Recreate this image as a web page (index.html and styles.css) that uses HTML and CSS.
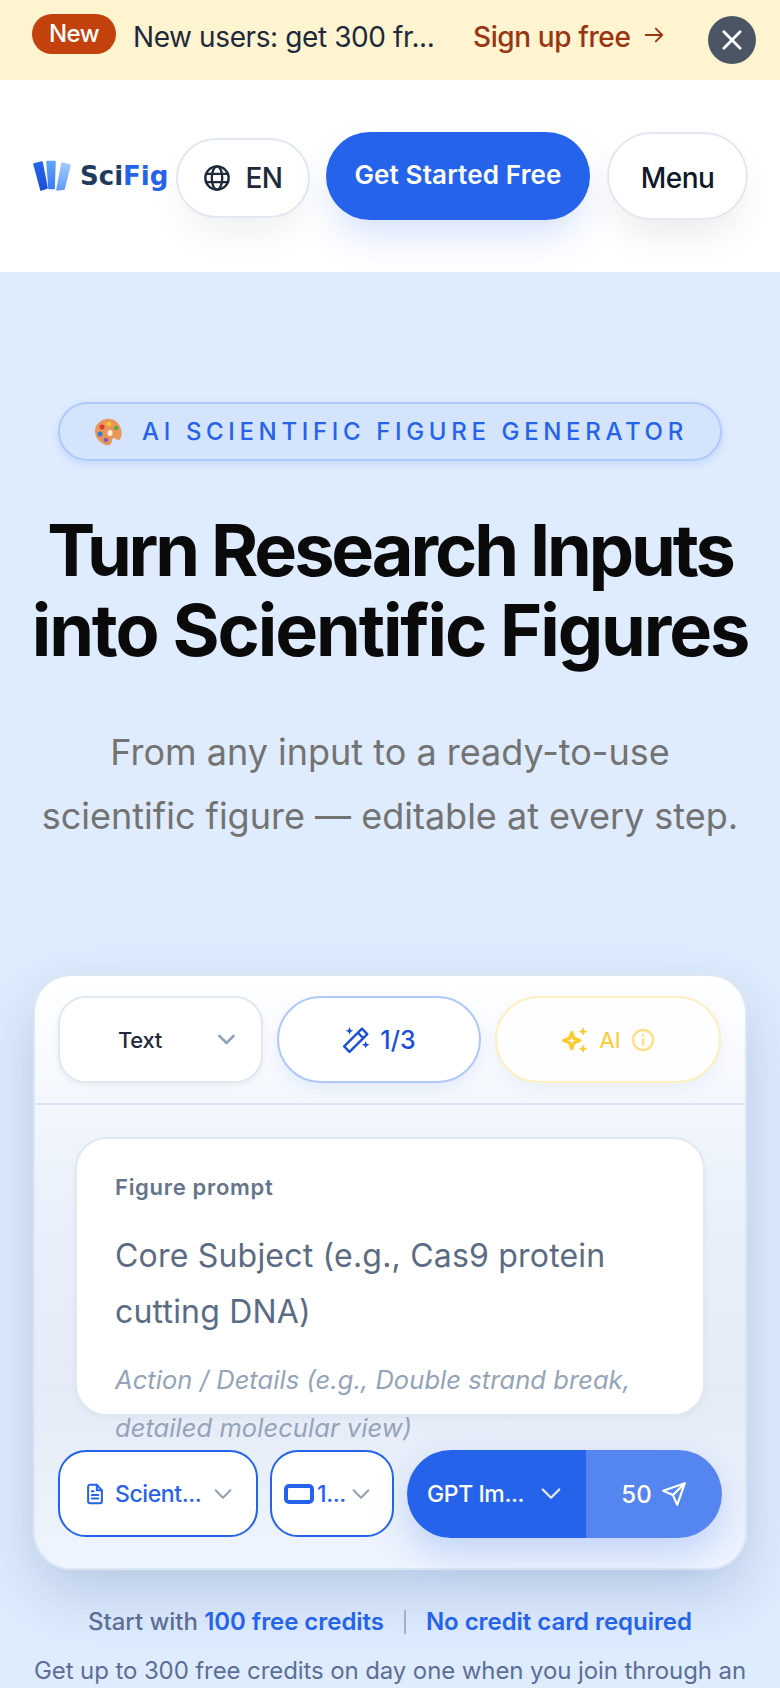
FILE: index.html
```html
<!DOCTYPE html>
<html lang="en">
<head>
    <meta charset="UTF-8">
    <meta name="viewport" content="width=device-width, initial-scale=1.0">
    <title>SciFig</title>
    <link rel="stylesheet" href="styles.css">
</head>
<body>
    <div class="page">
        <div class="promo">
            <span class="promo-badge">New</span>
            <span class="promo-text">New users: get 300 fr...</span>
            <a class="promo-link">Sign up free</a>
            <svg class="promo-arrow" viewBox="0 0 24 24"><path d="M3 12h18M14 5l7 7-7 7"/></svg>
            <button class="promo-close">
                <svg viewBox="0 0 24 24"><path d="M5 5l14 14M19 5L5 19"/></svg>
            </button>
        </div>

        <nav class="nav">
            <a class="logo">
                <svg class="logo-mark" viewBox="0 0 38 32">
                    <defs>
                        <linearGradient id="logo-a" x1="0" y1="0" x2="0" y2="1"><stop offset="0" stop-color="#2563eb"/><stop offset="1" stop-color="#1d4ed8"/></linearGradient>
                        <linearGradient id="logo-b" x1="0" y1="0" x2="0" y2="1"><stop offset="0" stop-color="#60a5fa"/><stop offset="1" stop-color="#3b7cf0"/></linearGradient>
                        <linearGradient id="logo-c" x1="0" y1="0" x2="0" y2="1"><stop offset="0" stop-color="#a3cbfd"/><stop offset="1" stop-color="#5f9cf8"/></linearGradient>
                    </defs>
                    <path fill="url(#logo-a)" stroke="url(#logo-a)" d="M1 4l8-2 5 26-6 2z"/>
                    <path fill="url(#logo-b)" stroke="url(#logo-b)" d="M14 1.500h8l-1 27h-5z"/>
                    <path fill="url(#logo-c)" stroke="url(#logo-c)" d="M29 3l8 2-6 24-7 1z"/>
                </svg>
                <span class="logo-text">Sci<span class="logo-accent">Fig</span></span>
            </a>
            <button class="lang-btn">
                <svg class="globe" viewBox="0 0 24 24"><circle cx="12" cy="12" r="10"/><ellipse cx="12" cy="12" rx="4.500" ry="10"/><path d="M2.500 8.500h19M2.500 15.500h19"/></svg>
                EN
            </button>
            <button class="start-btn">Get Started Free</button>
            <button class="menu-btn">Menu</button>
        </nav>

        <main class="hero">
            <div class="hero-pill">
                <svg class="palette" viewBox="0 0 30 30">
                    <path fill="#e8975a" d="M13 2c7-1 13 3 15 10 1 4 1 7-1 10-1 2-3 1-4 0-2-2-4-1-4 2 0 3-3 5-6 4C6 26 2 20 2 14 2 8 7 3 13 2z"/>
                    <circle cx="9" cy="10" r="2.500" fill="#e0392b"/>
                    <circle cx="16" cy="7" r="2.300" fill="#f4c531"/>
                    <circle cx="23" cy="11" r="2.300" fill="#5da83b"/>
                    <circle cx="7" cy="17" r="2.500" fill="#2f7fd6"/>
                    <circle cx="13" cy="23" r="2.300" fill="#8d5bb5"/>
                    <ellipse cx="17" cy="16" rx="2.500" ry="3" fill="#fbeee0"/>
                </svg>
                <span class="hero-pill-text">AI SCIENTIFIC FIGURE GENERATOR</span>
            </div>
            <h1 class="hero-title">Turn Research Inputs<br><span class="hero-title-wide">into Scientific Figures</span></h1>
            <p class="hero-sub">From any input to a ready-to-use<br>scientific figure — editable at every step.</p>

            <section class="composer">
                <div class="composer-top">
                    <button class="tool-btn tool-select">
                        <span class="tool-select-label">Text</span>
                        <svg class="chev chev-lg" viewBox="0 0 24 24"><path d="M4 8l8 8 8-8"/></svg>
                    </button>
                    <button class="tool-btn tool-steps">
                        <svg class="wand" viewBox="0 0 26 26">
                            <path d="M18.500 2.500l5 5L7 24l-5-5z"/><path d="M15 6.500l4.500 4.500"/>
                            <path class="fill" d="M7 1l1 2.500L10.500 4.500 8 5.500 7 8 6 5.500 3.500 4.500 6 3.500zM22 14l1 2.500 2.500 1-2.500 1-1 2.500-1-2.500-2.500-1 2.500-1z"/>
                        </svg>
                        1/3
                    </button>
                    <button class="tool-btn tool-ai">
                        <svg class="sparkle" viewBox="0 0 26 26">
                            <path class="thick" d="M10 6l2 5.500 5.500 2-5.500 2-2 5.500-2-5.500-5.500-2 5.500-2z"/>
                            <path class="fill" d="M20.500 1l1.200 3 3 1.200-3 1.200-1.200 3-1.200-3-3-1.200 3-1.200zM20.500 17l1.200 3 3 1.200-3 1.200-1.200 3-1.200-3-3-1.200 3-1.200z"/>
                        </svg>
                        AI
                        <svg class="info" viewBox="0 0 24 24"><circle cx="12" cy="12" r="10"/><path d="M12 11v6M12 7v.5"/></svg>
                    </button>
                </div>

                <div class="composer-body">
                    <div class="prompt-card">
                        <div class="prompt-label">Figure prompt</div>
                        <div class="prompt-main">Core Subject (e.g., Cas9 protein cutting DNA)</div>
                        <div class="prompt-detail">Action / Details (e.g., Double strand break, detailed molecular view)</div>
                    </div>
                    <div class="composer-bottom">
                        <button class="opt-btn opt-style">
                            <svg class="opt-icon" viewBox="0 0 24 24"><path d="M14 2H6.500A2 2 0 0 0 4.500 4v16a2 2 0 0 0 2 2h11a2 2 0 0 0 2-2V8z"/><path d="M14 2v6h5.500M8.500 9h2M8.500 13h7M8.500 17h7"/></svg>
                            <span class="opt-label">Scient...</span>
                            <svg class="chev" viewBox="0 0 24 24"><path d="M4 8l8 8 8-8"/></svg>
                        </button>
                        <button class="opt-btn opt-ratio">
                            <svg class="ratio-icon" viewBox="0 0 30 22"><rect x="2" y="3" width="26" height="16" rx="3"/></svg>
                            <span class="opt-label">1...</span>
                            <svg class="chev" viewBox="0 0 24 24"><path d="M4 8l8 8 8-8"/></svg>
                        </button>
                        <div class="send-group">
                            <button class="model-btn">
                                <span class="opt-label">GPT Im...</span>
                                <svg class="chev" viewBox="0 0 24 24"><path d="M3 7l9 9 9-9"/></svg>
                            </button>
                            <button class="send-btn">
                                50
                                <svg class="send-icon" viewBox="0 0 24 24"><path d="M22 2L15 22l-4-9-9-4zM22 2L11 13"/></svg>
                            </button>
                        </div>
                    </div>
                </div>
            </section>

            <p class="note">Start with <b>100 free credits</b><span class="note-sep"></span><b>No credit card required</b></p>
            <p class="note-more">Get up to 300 free credits on day one when you join through an</p>
        </main>
    </div>
</body>
</html>
```

FILE: styles.css
```css
* {
    margin: 0;
    padding: 0;
    box-sizing: border-box;
}
html, body {
    width: 100%;
    height: 100%;
    overflow: hidden;
    font-family: Inter, "Liberation Sans", sans-serif;
    background-color: #dfecfe;
}
button {
    font-family: inherit;
    background: none;
    border: none;
}
svg {
    display: block;
    flex-shrink: 0;
    fill: none;
    stroke: currentColor;
    stroke-linecap: round;
    stroke-linejoin: round;
}
.page {
    width: 780px;
    height: 1688px;
    overflow: hidden;
}

/* promo bar */
.promo {
    display: flex;
    align-items: center;
    height: 80px;
    padding: 0 24px 6px 32px;
    background-color: #fef5d0;
}
.promo-badge {
    flex-shrink: 0;
    width: 84px;
    height: 40px;
    margin-top: -6px;
    line-height: 40px;
    text-align: center;
    font-size: 24px;
    font-weight: 500;
    letter-spacing: -0.5px;
    color: #fff;
    background-color: #c2410c;
    border-radius: 20px;
}
.promo-text {
    width: 307px;
    margin-left: 17px;
    white-space: nowrap;
    font-size: 28px;
    font-weight: 400;
    letter-spacing: -0.4px;
    color: #1e293b;
}
.promo-link {
    margin-left: 33px;
    font-size: 28px;
    font-weight: 500;
    letter-spacing: -0.4px;
    color: #9a3412;
    white-space: nowrap;
}
.promo-arrow {
    width: 22px;
    height: 22px;
    margin: -4px 0 0 13px;
    color: #9a3412;
    stroke-width: 2;
}
.promo-close {
    display: flex;
    align-items: center;
    justify-content: center;
    width: 48px;
    height: 48px;
    margin: 6px 0 0 auto;
    color: #fff;
    background-color: #4b5563;
    border-radius: 50%;
}
.promo-close svg {
    width: 28px;
    height: 28px;
    stroke-width: 2.4;
}

/* nav */
.nav {
    display: flex;
    align-items: center;
    height: 192px;
    padding: 0 32px 0 33px;
    background-color: #fff;
}
.logo {
    display: flex;
    align-items: center;
    gap: 9px;
    width: 143px;
}
.logo-mark {
    width: 38px;
    height: 32px;
    stroke-width: 1.6;
}
.logo-text {
    font-family: "DejaVu Sans", sans-serif;
    font-size: 26px;
    font-weight: 700;
    color: #1e3a5f;
}
.logo-accent {
    color: #2563eb;
}
.lang-btn {
    display: flex;
    align-items: center;
    justify-content: center;
    gap: 14px;
    width: 134px;
    height: 80px;
    margin-top: 4px;
    font-size: 28px;
    font-weight: 500;
    letter-spacing: -0.5px;
    color: #1e293b;
    background-color: #fff;
    border: 2px solid #e2e8f0;
    border-radius: 40px;
    box-shadow: 0 20px 40px -10px rgba(15, 23, 42, 0.08);
}
.globe {
    width: 28px;
    height: 28px;
    stroke-width: 2;
}
.start-btn {
    width: 264px;
    height: 88px;
    margin-left: 16px;
    padding-bottom: 4px;
    font-size: 26px;
    font-weight: 600;
    letter-spacing: 0.15px;
    color: #fff;
    background-color: #2563eb;
    border-radius: 44px;
    box-shadow: 0 20px 40px -8px rgba(37, 99, 235, 0.22);
}
.menu-btn {
    width: 141px;
    height: 88px;
    margin-left: 17px;
    padding-top: 3px;
    font-size: 28px;
    font-weight: 500;
    letter-spacing: -0.5px;
    color: #0f172a;
    background-color: #fff;
    border: 2px solid #e2e8f0;
    border-radius: 44px;
    box-shadow: 0 20px 40px -10px rgba(15, 23, 42, 0.1);
}

/* hero */
.hero {
    display: flex;
    flex-direction: column;
    align-items: center;
    height: 1416px;
    padding-top: 130px;
    background-color: #dfecfe;
}
.hero > * {
    flex-shrink: 0;
}
.hero-pill {
    display: flex;
    align-items: center;
    gap: 19px;
    width: 664px;
    height: 59px;
    padding-left: 33px;
    background-color: #d4e4fd;
    border: 2px solid #b0c9fb;
    border-radius: 30px;
    box-shadow: 0 3px 8px rgba(37, 99, 235, 0.16);
}
.palette {
    width: 30px;
    height: 30px;
    stroke: none;
}
.hero-pill-text {
    font-size: 24px;
    font-weight: 500;
    letter-spacing: 4.65px;
    color: #2563eb;
    white-space: nowrap;
}
.hero-title {
    margin-top: 49px;
    font-size: 72px;
    line-height: 80px;
    font-weight: 700;
    letter-spacing: -3.1px;
    text-align: center;
    color: #0a0a0a;
    white-space: nowrap;
}
.hero-title-wide {
    letter-spacing: -2.1px;
}
.hero-sub {
    margin-top: 50px;
    font-size: 36px;
    line-height: 64px;
    font-weight: 400;
    letter-spacing: 0;
    text-align: center;
    color: #737373;
    white-space: nowrap;
}

/* composer card */
.composer {
    width: 714px;
    height: 596px;
    margin-top: 126px;
    background: linear-gradient(180deg, #ffffff 0%, #e9f0fb 40%, #e4ebf6 70%, #eff5fe 100%);
    border: 2px solid #dde6f3;
    border-radius: 38px;
    box-shadow: 0 24px 60px rgba(30, 64, 130, 0.2);
}
.composer-top {
    display: flex;
    gap: 14px;
    height: 129px;
    padding: 20px 23px 0;
    border-bottom: 2px solid #d9e4f6;
}
.tool-btn {
    display: flex;
    align-items: center;
    justify-content: center;
    height: 87px;
    background-color: #fff;
    border: 2px solid #e2e8f0;
}
.tool-select {
    width: 205px;
    padding: 0 24px 0 58px;
    justify-content: space-between;
    border-radius: 28px;
    box-shadow: 0 2px 6px rgba(15, 23, 42, 0.06);
    font-size: 22px;
    font-weight: 500;
    letter-spacing: -0.3px;
    color: #1e293b;
}
.tool-steps {
    width: 204px;
    gap: 10px;
    border-color: #afc8fb;
    border-radius: 44px;
    font-size: 25px;
    font-weight: 500;
    color: #1d4ed8;
    box-shadow: 0 6px 16px rgba(37, 99, 235, 0.08);
}
.tool-ai {
    width: 226px;
    gap: 10px;
    border-color: #fdefc0;
    border-radius: 44px;
    font-size: 22px;
    font-weight: 400;
    color: #fbcb2d;
    background-color: #fefefe;
    box-shadow: 0 6px 16px rgba(30, 64, 130, 0.05);
}
.chev {
    width: 22px;
    height: 22px;
    color: #94a3b8;
    stroke-width: 2.400;
}
.chev-lg {
    width: 21px;
    height: 21px;
    stroke-width: 3;
}
.wand {
    width: 28px;
    height: 28px;
    stroke-width: 2.200;
}
.wand .fill, .sparkle .fill {
    fill: currentColor;
    stroke: none;
}
.sparkle {
    width: 28px;
    height: 28px;
}
.sparkle .thick {
    stroke-width: 3;
}
.info {
    width: 24px;
    height: 24px;
    color: #fde08a;
    stroke-width: 2.400;
}
.composer-body {
    padding: 32px 23px 0;
}
.prompt-card {
    width: 630px;
    height: 279px;
    margin: 0 auto;
    padding: 34px 38px 0 38px;
    background-color: #fff;
    border: 2px solid #e2e8f0;
    border-radius: 32px;
    box-shadow: 0 2px 6px rgba(15, 23, 42, 0.04);
}
.prompt-label {
    font-size: 22px;
    line-height: 28px;
    font-weight: 600;
    letter-spacing: 0.7px;
    color: #64748b;
}
.prompt-main {
    margin-top: 27px;
    font-size: 32px;
    line-height: 56px;
    letter-spacing: 0.2px;
    color: #5c6b84;
}
.prompt-detail {
    margin-top: 16px;
    width: 540px;
    font-size: 25.500px;
    line-height: 48px;
    font-style: italic;
    letter-spacing: 0.06px;
    color: #94a3b8;
}
.composer-bottom {
    display: flex;
    gap: 12px;
    margin-top: 34px;
}
.opt-btn {
    display: flex;
    align-items: center;
    height: 87px;
    color: #2563eb;
    background-color: #fff;
    border: 2px solid #2563eb;
    border-radius: 28px;
    font-size: 23px;
    font-weight: 500;
    letter-spacing: -0.4px;
}
.opt-label {
    flex: 1;
    min-width: 0;
    white-space: nowrap;
    text-align: left;
}
.opt-style {
    width: 200px;
    gap: 9px;
    padding: 0 22px 0 24px;
}
.opt-icon {
    width: 22px;
    height: 24px;
    stroke-width: 2.200;
}
.opt-ratio {
    width: 124px;
    gap: 3px;
    padding: 0 20px 0 12px;
}
.ratio-icon {
    width: 30px;
    height: 22px;
    stroke-width: 4;
}
.send-group {
    display: flex;
    width: 315px;
    height: 88px;
    margin-left: 1px;
    border-radius: 44px;
    box-shadow: 0 16px 36px rgba(37, 99, 235, 0.22);
}
.model-btn {
    display: flex;
    align-items: center;
    gap: 20px;
    width: 179px;
    padding: 0 24px 0 20px;
    color: #fff;
    background-color: #2563eb;
    border-radius: 44px 0 0 44px;
    font-size: 23px;
    font-weight: 500;
    letter-spacing: -0.4px;
}
.model-btn .chev {
    color: #e6eefd;
}
.send-btn {
    display: flex;
    align-items: center;
    justify-content: center;
    gap: 9px;
    width: 136px;
    color: #fff;
    background-color: #5585ef;
    border-radius: 0 44px 44px 0;
    font-size: 24px;
    font-weight: 500;
}
.send-icon {
    width: 26px;
    height: 26px;
    stroke-width: 2;
}

/* notes under the card */
.note {
    margin-top: 32px;
    font-size: 24px;
    line-height: 40px;
    font-weight: 500;
    letter-spacing: -0.05px;
    color: #5b6f96;
    white-space: nowrap;
}
.note b {
    font-weight: 600;
    color: #2563eb;
}
.note-sep {
    display: inline-block;
    width: 2px;
    height: 24px;
    margin: 0 20px;
    vertical-align: -4px;
    background-color: #9fb0cc;
}
.note-more {
    margin-top: 5px;
    font-size: 24px;
    line-height: 48px;
    letter-spacing: -0.1px;
    color: #5b6f96;
    white-space: nowrap;
}
```
